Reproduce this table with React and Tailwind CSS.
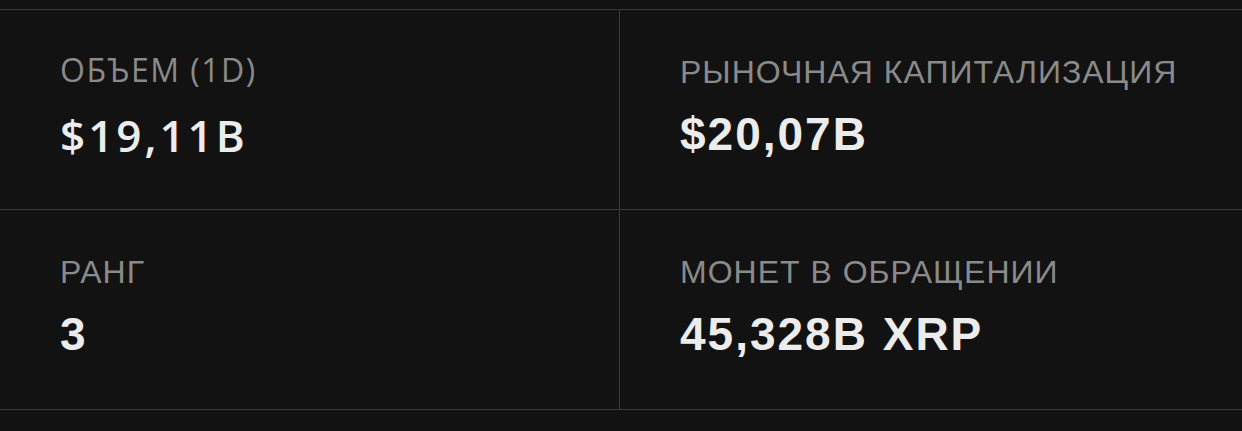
import React from 'react';

const stats = [
  { label: 'ОБЪЕМ (1D)', value: '$19,11B', alt: true },
  { label: 'РЫНОЧНАЯ КАПИТАЛИЗАЦИЯ', value: '$20,07B' },
  { label: 'РАНГ', value: '3' },
  { label: 'МОНЕТ В ОБРАЩЕНИИ', value: '45,328B XRP' },
];

const StatCell = ({ label, value, alt, right }) => (
  <div className={`h-[200px] border-b border-[#3a3a3a] px-[60px] pt-[42px] ${right ? '' : 'border-r'}`}>
    {alt ? (
      <>
        <div className="font-['Open_Sans',sans-serif] text-[32px] leading-[36px] tracking-[1.5px] text-[#8a8a8a]">
          {label}
        </div>
        <div className="mt-[19px] font-['Open_Sans',sans-serif] text-[44px] leading-[56px] font-semibold tracking-[3px] text-[#ececec]">
          {value}
        </div>
      </>
    ) : (
      <>
        <div className="font-['Liberation_Sans',sans-serif] text-[32px] leading-[40px] tracking-[1px] text-[#8a8a8a]">
          {label}
        </div>
        <div className="mt-[14px] font-['Liberation_Sans',sans-serif] text-[46px] leading-[56px] font-bold tracking-[2px] text-[#ececec]">
          {value}
        </div>
      </>
    )}
  </div>
);

export default function App() {
  return (
    <div className="w-[1242px] h-[431px] bg-[#121212] pt-[9px]">
      <div className="grid grid-cols-[620px_1fr] border-t border-[#3a3a3a]">
        {stats.map((s, i) => (
          <StatCell key={i} {...s} right={i % 2 === 1} />
        ))}
      </div>
    </div>
  );
}
